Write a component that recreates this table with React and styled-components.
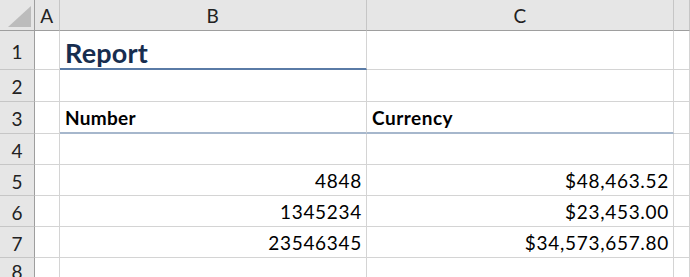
import { Fragment } from 'react';
import styled, { createGlobalStyle } from 'styled-components';

const GlobalStyle = createGlobalStyle`
  html, body {
    margin: 0;
    padding: 0;
    background: #ffffff;
    overflow: hidden;
  }
  body {
    font-family: Lato, 'Open Sans', sans-serif;
    color: #000000;
  }
`;

const COLS = '35px 25px 307px 307px 1fr';
const GRID = '#d4d4d4';

const Sheet = styled.div`
  width: 690px;
  height: 277px;
  display: grid;
  grid-template-columns: ${COLS};
  grid-template-rows: 31px 39px 32px 32px 31px 31px 31px 31px 1fr;
  background: #ffffff;
`;

const Corner = styled.div`
  box-sizing: border-box;
  background: #e6e6e6;
  border-right: 1px solid #9e9e9e;
  border-bottom: 1px solid #9e9e9e;
  display: flex;
  align-items: flex-end;
  justify-content: flex-end;
  padding: 0 3px 3px 0;
`;

const ColHead = styled.div`
  box-sizing: border-box;
  background: #e6e6e6;
  border-right: 1px solid #c6c6c6;
  border-bottom: 1px solid #9e9e9e;
  display: flex;
  align-items: center;
  justify-content: center;
  font-size: 19px;
  color: #222222;
  letter-spacing: 0.5px;
`;

const RowHead = styled.div`
  box-sizing: border-box;
  background: #e6e6e6;
  border-right: 1px solid #9e9e9e;
  border-bottom: 1px solid #c6c6c6;
  display: flex;
  align-items: center;
  justify-content: center;
  font-size: 19px;
  color: #222222;
  padding-top: 2px;
`;

const Cell = styled.div`
  box-sizing: border-box;
  border-right: 1px solid ${GRID};
  border-bottom: ${(p) => p.$rule || `1px solid ${GRID}`};
  display: flex;
  align-items: flex-end;
  justify-content: ${(p) => (p.$right ? 'flex-end' : 'flex-start')};
  padding: 0 4px ${(p) => p.$pad ?? 3}px 5px;
  line-height: 1.15;
  font-size: ${(p) => p.$size || 19}px;
  font-weight: ${(p) => (p.$bold ? 700 : 400)};
  color: ${(p) => p.$color || '#000000'};
  letter-spacing: ${(p) => p.$track ?? 0.7}px;
  white-space: nowrap;
  overflow: hidden;
`;

function CornerMark() {
  return (
    <svg width="23" height="21" viewBox="0 0 23 21">
      <polygon points="23,0 23,21 0,21" fill="#bcbcbc" />
    </svg>
  );
}

const TITLE_RULE = '2px solid #5a7ba6';
const HEAD_RULE = '2px solid #a6b7cc';

const rows = [
  { n: 1, b: { text: 'Report', bold: true, size: 27, color: '#172d4f', rule: TITLE_RULE, track: 0.2, pad: 0 }, c: {} },
  { n: 2, b: {}, c: {} },
  {
    n: 3,
    b: { text: 'Number', bold: true, size: 19, rule: HEAD_RULE, track: 0.3 },
    c: { text: 'Currency', bold: true, size: 19, rule: HEAD_RULE, track: 0.5 },
  },
  { n: 4, b: {}, c: {} },
  { n: 5, b: { text: '4848', right: true }, c: { text: '$48,463.52', right: true } },
  { n: 6, b: { text: '1345234', right: true }, c: { text: '$23,453.00', right: true } },
  { n: 7, b: { text: '23546345', right: true }, c: { text: '$34,573,657.80', right: true } },
  { n: 8, b: {}, c: {} },
];

function DataCell({ cell }) {
  return (
    <Cell
      $right={cell.right}
      $bold={cell.bold}
      $size={cell.size}
      $color={cell.color}
      $rule={cell.rule}
      $track={cell.track}
      $pad={cell.pad}
    >
      {cell.text}
    </Cell>
  );
}

export default function App() {
  return (
    <>
      <GlobalStyle />
      <Sheet>
        <Corner>
          <CornerMark />
        </Corner>
        <ColHead>A</ColHead>
        <ColHead>B</ColHead>
        <ColHead>C</ColHead>
        <ColHead />
        {rows.map((r) => (
          <Fragment key={r.n}>
            <RowHead>{r.n}</RowHead>
            <Cell />
            <DataCell cell={r.b} />
            <DataCell cell={r.c} />
            <Cell />
          </Fragment>
        ))}
      </Sheet>
    </>
  );
}
